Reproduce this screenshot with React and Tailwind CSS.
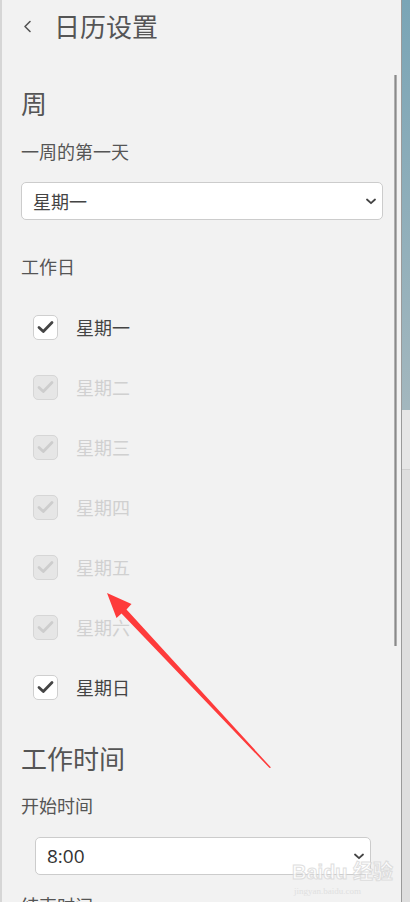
import React from "react";

const FONT = { fontFamily: '"Noto Sans CJK SC", "Noto Sans", sans-serif' };

function Check({ color }) {
  return (
    <svg width="17" height="14" viewBox="0 0 17 14">
      <path d="M2 7.5 L6.3 11.5 L15 2.5" fill="none" stroke={color} strokeWidth="2.8" strokeLinecap="round" strokeLinejoin="round" />
    </svg>
  );
}

function Chevron() {
  return (
    <svg width="10" height="7" viewBox="0 0 10 7">
      <path d="M1 1.5 L5 5.2 L9 1.5" fill="none" stroke="#444" strokeWidth="1.8" strokeLinecap="round" strokeLinejoin="round" />
    </svg>
  );
}

function Row({ label, enabled }) {
  return (
    <div className="h-[60px] flex items-center">
      <div
        className={
          enabled
            ? "ml-[12px] w-[25px] h-[25px] rounded-[5px] border border-[#cfcfcf] bg-white flex items-center justify-center"
            : "ml-[12px] w-[25px] h-[25px] rounded-[5px] border border-[#d6d6d6] bg-[#e6e6e6] flex items-center justify-center"
        }
      >
        <Check color={enabled ? "#454545" : "#cdcdcd"} />
      </div>
      <span
        className={
          enabled
            ? "ml-[18px] text-[18px] leading-[24px] text-[#444]"
            : "ml-[18px] text-[18px] leading-[24px] text-[#d0d0d0]"
        }
      >
        {label}
      </span>
    </div>
  );
}

export default function App() {
  const days = [
    ["星期一", true],
    ["星期二", false],
    ["星期三", false],
    ["星期四", false],
    ["星期五", false],
    ["星期六", false],
    ["星期日", true],
  ];
  return (
    <div className="w-[410px] h-[902px] overflow-hidden flex bg-[#f2f2f2] relative" style={FONT}>
      <div className="w-[2px] h-full bg-[#d6d6d6]" />
      <div className="flex-1 h-full relative">
        <div className="h-[52px] flex items-center">
          <svg className="ml-[21px]" width="9" height="13" viewBox="0 0 9 13">
            <path d="M7 1.5 L2 6.5 L7 11.5" fill="none" stroke="#555" strokeWidth="1.6" strokeLinecap="round" strokeLinejoin="round" />
          </svg>
          <span className="ml-[22px] text-[26px] leading-[36px] text-[#555]">日历设置</span>
        </div>
        <div className="pl-[19px]">
          <div className="mt-[33px] text-[26px] leading-[36px] text-[#555]">周</div>
          <div className="mt-[18px] text-[18px] leading-[24px] text-[#555]">一周的第一天</div>
          <div className="mt-[19px] w-[362px] h-[38px] rounded-[5px] border border-[#cccccc] bg-white flex items-center justify-between pl-[11px] pr-[6px]">
            <span className="text-[18px] leading-[24px] text-[#444]">星期一</span>
            <Chevron />
          </div>
          <div className="mt-[34px] text-[18px] leading-[24px] text-[#555]">工作日</div>
          <div className="mt-[19px] flex flex-col">
            {days.map(([l, e]) => (
              <Row key={l} label={l} enabled={e} />
            ))}
          </div>
          <div className="mt-[23px] text-[26px] leading-[36px] text-[#555]">工作时间</div>
          <div className="mt-[17px] text-[18px] leading-[24px] text-[#555]">开始时间</div>
          <div className="mt-[20px] ml-[14px] w-[336px] h-[38px] rounded-[5px] border border-[#cccccc] bg-white flex items-center justify-between pl-[11px] pr-[6px]">
            <span className="text-[19px] leading-[24px] text-[#333]" style={{ fontFamily: '"Open Sans", "Noto Sans", sans-serif' }}>8:00</span>
            <Chevron />
          </div>
          <div className="mt-[18px] text-[18px] leading-[24px] text-[#555]">结束时间</div>
        </div>
        <div className="absolute left-[392px] top-[75px] w-[3px] h-[571px] bg-[#b0b0b0] flex justify-center">
          <div className="w-[1px] h-full bg-[#8a8a8a]" />
        </div>
        <div className="absolute left-[290px] top-[861px] whitespace-nowrap text-[20px] leading-[22px] font-bold text-white opacity-80" style={{ fontFamily: '"Liberation Sans", "Noto Sans CJK SC", sans-serif', WebkitTextStroke: "1px #d8d8d8" }}>
          Baidu 经验
        </div>
        <div className="absolute left-[292px] top-[886px] whitespace-nowrap text-[9px] leading-[10px] text-[#e0e0e0]" style={{ fontFamily: '"Liberation Serif", serif' }}>
          jingyan.baidu.com
        </div>
      </div>
      <div className="w-[1px] h-full bg-[#9a9a9a]" />
      <div className="w-[8px] h-full flex flex-col">
        <div className="h-[410px] bg-gradient-to-b from-[#7aa5b6] to-[#a3b7be]" />
        <div className="h-[60px] bg-[#e6e6e6] border-b border-[#d0d0d0]" />
        <div className="flex-1 bg-[#dedede]" />
      </div>
      <svg className="absolute left-0 top-0 pointer-events-none" width="410" height="902" viewBox="0 0 410 902">
        <polygon points="107,593 131.5,604 126.5,609.5 271,767.5 269.5,768 121.5,613.5 116.5,618" fill="#fe3b3b" />
      </svg>
    </div>
  );
}
